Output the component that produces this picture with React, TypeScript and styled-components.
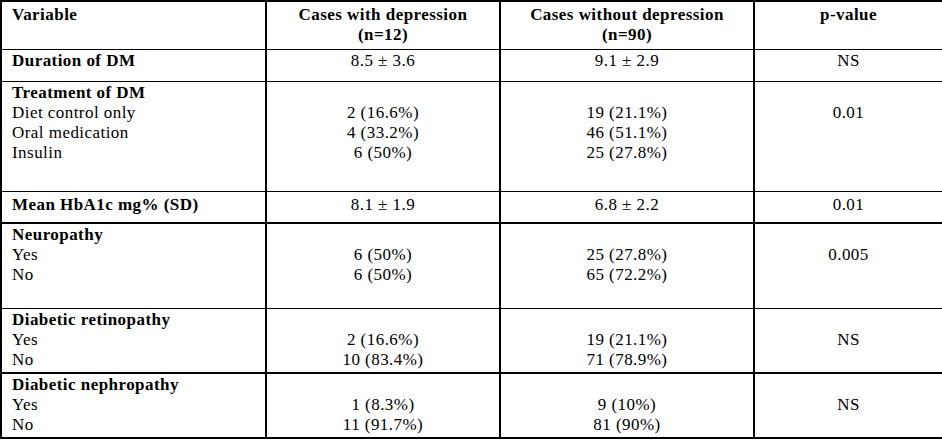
import React from 'react';
import styled, {createGlobalStyle} from 'styled-components';

const GlobalStyle = createGlobalStyle`
    body {
        margin: 0;
        background: #ffffff;
        font-family: "Liberation Serif", "Times New Roman", serif;
        color: #000000;
    }
`

type Row = {
    label: string[];
    withDep: string[];
    withoutDep: string[];
    p: string[];
    height: number;
    bottom: number;
    pad?: number;
};

const rows: Row[] = [
    {label: ['Duration of DM'], withDep: ['8.5 ± 3.6'], withoutDep: ['9.1 ± 2.9'], p: ['NS'], height: 32, bottom: 1},
    {
        label: ['Treatment of DM', 'Diet control only', 'Oral medication', 'Insulin'],
        withDep: ['', '2 (16.6%)', '4 (33.2%)', '6 (50%)'],
        withoutDep: ['', '19 (21.1%)', '46 (51.1%)', '25 (27.8%)'],
        p: ['', '0.01'],
        height: 110,
        bottom: 1,
    },
    {
        label: ['Mean HbA1c mg% (SD)'],
        withDep: ['8.1 ± 1.9'],
        withoutDep: ['6.8 ± 2.2'],
        p: ['0.01'],
        height: 32,
        bottom: 2,
        pad: 3,
    },
    {
        label: ['Neuropathy', 'Yes', 'No'],
        withDep: ['', '6 (50%)', '6 (50%)'],
        withoutDep: ['', '25 (27.8%)', '65 (72.2%)'],
        p: ['', '0.005'],
        height: 85,
        bottom: 1,
    },
    {
        label: ['Diabetic retinopathy', 'Yes', 'No'],
        withDep: ['', '2 (16.6%)', '10 (83.4%)'],
        withoutDep: ['', '19 (21.1%)', '71 (78.9%)'],
        p: ['', 'NS'],
        height: 65,
        bottom: 2,
    },
    {
        label: ['Diabetic nephropathy', 'Yes', 'No'],
        withDep: ['', '1 (8.3%)', '11 (91.7%)'],
        withoutDep: ['', '9 (10%)', '81 (90%)'],
        p: ['', 'NS'],
        height: 65,
        bottom: 2,
    },
];

const Lines = ({items, boldFirst}: { items: string[]; boldFirst?: boolean }) => (
    <>
        {items.map((t, i) => (
            <Line key={i} bold={boldFirst && i === 0}>{t || '\u00a0'}</Line>
        ))}
    </>
);

export default function App() {
    return (
        <>
            <GlobalStyle/>
            <Table>
                <colgroup>
                    <col style={{width: 265}}/>
                    <col style={{width: 234}}/>
                    <col style={{width: 254}}/>
                    <col style={{width: 189}}/>
                </colgroup>
                <thead>
                <HeadRow>
                    <HeadCell align={'left'}>Variable</HeadCell>
                    <HeadCell>Cases with depression<br/>(n=12)</HeadCell>
                    <HeadCell>Cases without depression<br/>(n=90)</HeadCell>
                    <HeadCell>p-value</HeadCell>
                </HeadRow>
                </thead>
                <tbody>
                {rows.map((r, i) => (
                    <BodyRow key={i} h={r.height} bottom={r.bottom}>
                        <Cell align={'left'} pad={r.pad}><Lines items={r.label} boldFirst/></Cell>
                        <Cell pad={r.pad}><Lines items={r.withDep}/></Cell>
                        <Cell pad={r.pad}><Lines items={r.withoutDep}/></Cell>
                        <Cell pad={r.pad}><Lines items={r.p}/></Cell>
                    </BodyRow>
                ))}
                </tbody>
            </Table>
        </>
    );
}

const Table = styled.table`
    width: 942px;
    table-layout: fixed;
    border-collapse: collapse;
    border: 2px solid #000;
    font-family: "Liberation Serif", "Times New Roman", serif;
    font-size: 17px;
    letter-spacing: 0.45px;
    line-height: 20px;
    color: #000;
`

const HeadRow = styled.tr`
    height: 48px;
    border-bottom: 1px solid #000;
`

const HeadCell = styled.th<{ align?: 'left' | 'center' }>`
    vertical-align: top;
    text-align: ${({align}) => align || 'center'};
    font-weight: 700;
    padding: 3px 0 0 ${({align}) => (align === 'left' ? '10px' : '0')};
    border-left: 2px solid #000;
    border-right: 2px solid #000;
`

const BodyRow = styled.tr<{ h: number; bottom: number }>`
    height: ${({h}) => h}px;
    border-bottom: ${({bottom}) => bottom}px solid #000;
`

const Cell = styled.td<{ align?: 'left' | 'center'; pad?: number }>`
    vertical-align: top;
    text-align: ${({align}) => align || 'center'};
    padding: ${({pad}) => pad ?? 1}px 0 0 ${({align}) => (align === 'left' ? '10px' : '0')};
    border-left: 2px solid #000;
    border-right: 2px solid #000;
`

const Line = styled.div<{ bold?: boolean }>`
    font-weight: ${({bold}) => (bold ? 700 : 400)};
    white-space: nowrap;
`
